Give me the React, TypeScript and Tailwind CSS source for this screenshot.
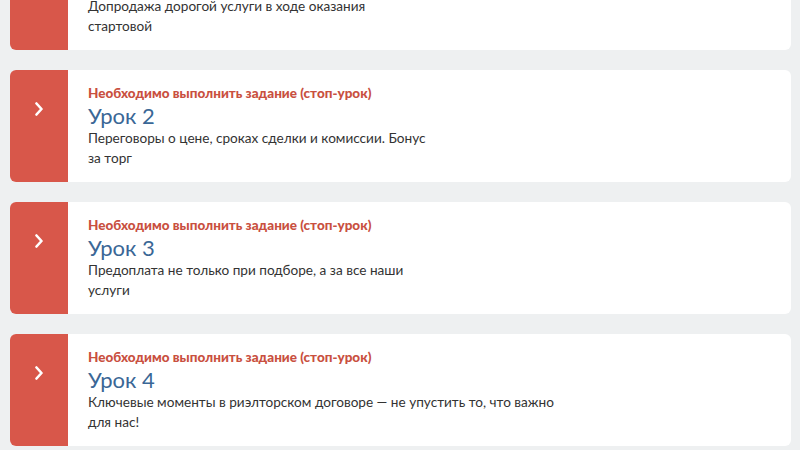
import React from "react";

type Lesson = { title: string; lines: string[] };

const lessons: Lesson[] = [
  { title: "Урок 1", lines: ["Допродажа дорогой услуги в ходе оказания", "стартовой"] },
  { title: "Урок 2", lines: ["Переговоры о цене, сроках сделки и комиссии. Бонус", "за торг"] },
  { title: "Урок 3", lines: ["Предоплата не только при подборе, а за все наши", "услуги"] },
  { title: "Урок 4", lines: ["Ключевые моменты в риэлторском договоре — не упустить то, что важно", "для нас!"] },
];

function Card({ lesson }: { lesson: Lesson }) {
  return (
    <div className="flex h-[112px] rounded-[6px] bg-white overflow-hidden">
      <div className="w-[58px] shrink-0 bg-[#d8574a] flex justify-center pt-[32px]">
        <svg width="10" height="14" viewBox="0 0 10 14">
          <polyline points="2.5,1.5 7.5,7 2.5,12.5" fill="none" stroke="#ffffff" strokeWidth="2.6" strokeLinecap="round" strokeLinejoin="round" />
        </svg>
      </div>
      <div className="pl-[20px] pt-[14px]">
        <div className="text-[13.5px] leading-[18px] font-black text-[#c9503f]">Необходимо выполнить задание (стоп-урок)</div>
        <div className="text-[22px] leading-[26px] mt-[1px] text-[#3a6796]">{lesson.title}</div>
        <div className="text-[13.6px] leading-[20px] -mt-[1px] text-[#333333]">
          {lesson.lines.map((l, i) => (
            <div key={i}>{l}</div>
          ))}
        </div>
      </div>
    </div>
  );
}

export default function App() {
  return (
    <div className="w-[800px] h-[450px] overflow-hidden bg-[#eef0f1]" style={{ fontFamily: "Lato, 'Open Sans', sans-serif" }}>
      <div className="-mt-[62px] pl-[10px] pr-[9px] flex flex-col gap-[20px]">
        {lessons.map((l, i) => (
          <Card key={i} lesson={l} />
        ))}
      </div>
    </div>
  );
}
